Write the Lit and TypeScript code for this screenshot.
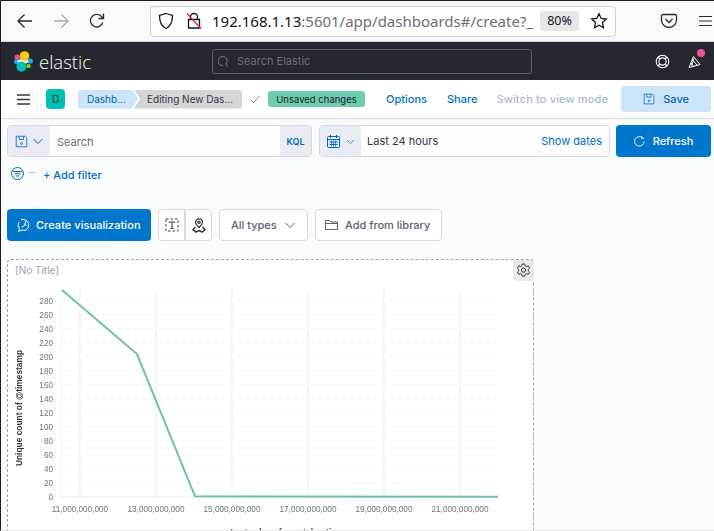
import { LitElement, html, css, svg } from "lit";
import { customElement } from "lit/decorators.js";

const Y_TICKS = [280, 260, 240, 220, 200, 180, 160, 140, 120, 100, 80, 60, 40, 20, 0];
const X_TICKS = [
  [80, "11,000,000,000"],
  [156, "13,000,000,000"],
  [232, "15,000,000,000"],
  [308, "17,000,000,000"],
  [384, "19,000,000,000"],
  [460, "21,000,000,000"],
] as const;

const yPos = (v: number) => 498 - (v / 20) * 14.02;

const chevron = html`<svg class="chev" width="12" height="12" viewBox="0 0 12 12"><path d="M1.5 4l4.5 4.5L10.500 4" fill="none" stroke="currentColor" stroke-width="1"/></svg>`;

const saveIcon = (size = 16) => html`<svg width=${size} height=${size} viewBox="0 0 16 16" fill="none" stroke="currentColor" stroke-width="1"><path d="M1.500 1.500h11l2 2v11h-13z"/><path d="M5 1.500v4h5.500v-4"/><circle cx="8" cy="10.500" r="1.200"/></svg>`;

@customElement("browser-bar")
class BrowserBar extends LitElement {
  static styles = css`
    :host {
      display: flex;
      align-items: center;
      height: 40px;
      background: #f9f9fb;
      border-bottom: 1px solid #cfcfd8;
      color: #2b2a33;
      font-family: "Noto Sans", sans-serif;
    }
    .nav {
      display: flex;
      align-items: center;
      gap: 18px;
      padding-left: 16px;
      width: 150px;
      box-sizing: border-box;
    }
    .url {
      display: flex;
      align-items: center;
      width: 466px;
      height: 31px;
      box-sizing: border-box;
      background: #fff;
      border: 1px solid #cfcfd8;
      border-radius: 4px;
      padding-left: 7px;
    }
    .lock {
      margin-left: 12px;
    }
    .addr {
      margin-left: 10px;
      width: 327px;
      overflow: hidden;
      white-space: nowrap;
      font-size: 15px;
      color: #6f6e76;
    }
    .addr b {
      font-weight: 400;
      color: #15141a;
    }
    .zoom {
      width: 39px;
      height: 20px;
      line-height: 20px;
      margin-left: 1px;
      text-align: center;
      background: #e7e7ea;
      border-radius: 3px;
      font-size: 12.500px;
      color: #15141a;
    }
    .star {
      margin-left: 11px;
    }
    .right {
      display: flex;
      align-items: center;
      margin-left: 44px;
      gap: 21px;
    }
  `;

  render() {
    return html`
      <div class="nav">
        <svg width="18" height="18" viewBox="0 0 18 18" fill="none" stroke="#2b2a33" stroke-width="1.300"><path d="M16 9H2M8.500 2.500L2 9l6.500 6.500"/></svg>
        <svg width="18" height="18" viewBox="0 0 18 18" fill="none" stroke="#a9a9ae" stroke-width="1.300"><path d="M2 9h14M9.500 2.500L16 9l-6.500 6.500"/></svg>
        <svg width="18" height="18" viewBox="0 0 18 18" fill="none" stroke="#2b2a33" stroke-width="1.300"><path d="M14.800 10.500A6.300 6.300 0 1 1 13 4l2 2M15.500 1.500V6.500H10.500"/></svg>
      </div>
      <div class="url">
        <svg width="16" height="18" viewBox="0 0 16 18" fill="none" stroke="#15141a" stroke-width="1.300"><path d="M8 1.500l6.500 2c0 6-1 10.500-6.500 13C2.500 14 1.500 9.500 1.500 3.500z"/></svg>
        <svg class="lock" width="16" height="18" viewBox="0 0 16 18" fill="none"><path d="M4.500 7.500V5a3.500 3.500 0 0 1 7 0v2.500M2.500 7.500h11v8.500h-11z" stroke="#15141a" stroke-width="1.300"/><path d="M1 1.500L15 16.500" stroke="#e22850" stroke-width="1.500"/></svg>
        <div class="addr"><b>192.168.1.13</b>:5601/app/dashboards#/create?_</div>
        <div class="zoom">80%</div>
        <svg class="star" width="18" height="18" viewBox="0 0 18 18" fill="none" stroke="#15141a" stroke-width="1.300"><path d="M9 1.800l2.200 4.700 5.100.6-3.800 3.500 1 5.100L9 13.200l-4.500 2.500 1-5.100-3.800-3.500 5.100-.6z"/></svg>
      </div>
      <div class="right">
        <svg width="18" height="18" viewBox="0 0 18 18" fill="none" stroke="#2b2a33" stroke-width="1.300"><path d="M3 2.500h12a1.500 1.500 0 0 1 1.500 1.500v4a7.500 7.500 0 0 1-15 0V4A1.500 1.500 0 0 1 3 2.500z"/><path d="M5.500 7L9 10.500 12.500 7"/></svg>
        <svg width="13" height="12" viewBox="0 0 13 12" stroke="#2b2a33" stroke-width="1.200"><path d="M0 1.500h13M0 6h13M0 10.500h13"/></svg>
      </div>
    `;
  }
}

@customElement("kbn-header")
class KbnHeader extends LitElement {
  static styles = css`
    :host {
      display: flex;
      align-items: center;
      height: 38px;
      background: #25282f;
      font-family: "Inter", sans-serif;
    }
    .logo {
      display: flex;
      align-items: center;
      width: 212px;
      padding-left: 14px;
      box-sizing: border-box;
      gap: 6px;
      color: #fff;
      font-family: "Open Sans", sans-serif;
      font-weight: 300;
      font-size: 18.500px;
    }
    .search {
      display: flex;
      align-items: center;
      gap: 8px;
      width: 320px;
      height: 25px;
      box-sizing: border-box;
      border: 1px solid #5d6066;
      border-radius: 3px;
      padding-left: 5px;
      color: #6d7076;
      font-size: 11px;
    }
    .icons {
      display: flex;
      align-items: center;
      margin-left: 123px;
      gap: 18px;
    }
    .bell {
      position: relative;
      display: flex;
    }
    .dot {
      position: absolute;
      top: -5px;
      right: -3px;
      width: 8px;
      height: 8px;
      border-radius: 50%;
      background: #f04e98;
    }
  `;

  render() {
    return html`
      <div class="logo">
        <svg width="19" height="21" viewBox="0 0 19 21">
          <circle cx="3.200" cy="6.200" r="2.600" fill="#f04e98"/>
          <circle cx="2.800" cy="10.800" r="2.700" fill="#1ba9f5"/>
          <circle cx="16.300" cy="10" r="2.600" fill="#1ba9f5"/>
          <circle cx="14.500" cy="15" r="2.200" fill="#93c90e"/>
          <ellipse cx="9" cy="10.300" rx="5.500" ry="2.600" fill="#e8f0f0"/>
          <circle cx="10.500" cy="5" r="4.800" fill="#fec514"/>
          <circle cx="7.500" cy="15.800" r="5" fill="#00bfb3"/>
        </svg>
        <span>elastic</span>
      </div>
      <div class="search">
        <svg width="11" height="11" viewBox="0 0 12 12" fill="none" stroke="#8a8d93" stroke-width="1"><path d="M8.500 9A5 5 0 1 0 5 10.500M8.500 9l2.500 2.500"/></svg>
        <span>Search Elastic</span>
      </div>
      <div class="icons">
        <svg width="15" height="15" viewBox="0 0 15 15" fill="none" stroke="#fff" stroke-width="1.100"><circle cx="7.500" cy="7.500" r="6.300"/><circle cx="7.500" cy="7.500" r="3.600"/><path d="M3 3l2 2M12 3l-2 2M3 12l2-2M12 12l-2-2"/></svg>
        <div class="bell">
          <svg width="14" height="15" viewBox="0 0 14 15" fill="none" stroke="#fff" stroke-width="1"><path d="M1 13.500L5.500 2.500l6.500 8z"/><path d="M4.200 5.500l5.500 6.300M2.800 9l3.500 3.800M6 4.500l-2.500 7"/></svg>
          <span class="dot"></span>
        </div>
      </div>
    `;
  }
}

@customElement("kbn-appbar")
class KbnAppbar extends LitElement {
  static styles = css`
    :host {
      display: flex;
      align-items: center;
      height: 38px;
      box-sizing: content-box;
      background: #fff;
      border-bottom: 1px solid #d3dae6;
      font-family: "Inter", sans-serif;
      font-size: 11px;
    }
    .burger {
      margin-left: 17px;
    }
    .badge {
      width: 19px;
      height: 20px;
      line-height: 20px;
      margin-left: 16px;
      text-align: center;
      background: #00bfb3;
      color: #1a1c21;
      border-radius: 4px;
      font-size: 10px;
    }
    .crumbs {
      display: flex;
      margin-left: 13px;
      height: 19px;
      line-height: 19px;
      font-size: 10px;
    }
    .crumb {
      white-space: nowrap;
    }
    .c1 {
      width: 60px;
      padding-left: 9px;
      box-sizing: border-box;
      background: #cce4f5;
      color: #006bb4;
      border-radius: 4px 0 0 4px;
      clip-path: polygon(0 0, 54px 0, 60px 50%, 54px 100%, 0 100%);
    }
    .c2 {
      width: 108px;
      margin-left: -4px;
      padding-left: 13px;
      box-sizing: border-box;
      background: #d3d5d9;
      color: #343741;
      border-radius: 0 4px 4px 0;
      clip-path: polygon(0 0, 100% 0, 100% 100%, 0 100%, 6px 50%);
    }
    .check {
      margin: 0 8px;
      color: #69707d;
    }
    .unsaved {
      width: 97px;
      height: 16px;
      line-height: 17px;
      text-align: center;
      background: #6dccb1;
      color: #1a1c21;
      border-radius: 3px;
      font-size: 9.500px;
      white-space: nowrap;
    }
    .link {
      color: #0071c2;
      font-weight: 500;
      white-space: nowrap;
    }
    .options {
      margin-left: 21px;
    }
    .share {
      margin-left: 20px;
    }
    .off {
      margin-left: 19px;
      color: #afb8cc;
      letter-spacing: 0.15px;
    }
    .save {
      display: flex;
      align-items: center;
      justify-content: center;
      gap: 8px;
      width: 90px;
      height: 26px;
      margin-left: 13px;
      background: #cce4f5;
      border-radius: 3px;
      color: #006bb4;
      font-weight: 500;
    }
  `;

  render() {
    return html`
      <svg class="burger" width="13" height="11" viewBox="0 0 13 11" stroke="#343741" stroke-width="1.300"><path d="M0 1h13M0 5.500h13M0 10h13"/></svg>
      <div class="badge">D</div>
      <div class="crumbs">
        <div class="crumb c1">Dashb...</div>
        <div class="crumb c2">Editing New Das...</div>
      </div>
      <svg class="check" width="10" height="10" viewBox="0 0 10 10" fill="none" stroke="currentColor" stroke-width="0.900"><path d="M.5 5.500L3.500 8.500 9.500 2"/></svg>
      <div class="unsaved">Unsaved changes</div>
      <span class="link options">Options</span>
      <span class="link share">Share</span>
      <span class="link off">Switch to view mode</span>
      <div class="save">${saveIcon(12)}<span>Save</span></div>
    `;
  }
}

@customElement("query-bar")
class QueryBar extends LitElement {
  static styles = css`
    :host {
      display: flex;
      gap: 7px;
      padding: 6px 3px 0 7px;
      font-family: "Inter", sans-serif;
      font-size: 11px;
    }
    .group {
      display: flex;
      height: 32px;
      box-sizing: border-box;
      border: 1px solid #d3dae6;
      border-radius: 4px;
      overflow: hidden;
      background: #fff;
    }
    .q {
      width: 305px;
    }
    .d {
      width: 291px;
      margin-right: -1px;
    }
    .pre {
      display: flex;
      align-items: center;
      background: #e9edf3;
      color: #006bb4;
    }
    .q .pre {
      width: 42px;
      padding-left: 7px;
      gap: 4px;
      box-sizing: border-box;
    }
    .d .pre {
      width: 41px;
      padding-left: 7px;
      gap: 6px;
      box-sizing: border-box;
    }
    .d .chev {
      width: 9px;
      height: 9px;
    }
    .field {
      flex: 1;
      display: flex;
      align-items: center;
      justify-content: space-between;
      padding: 0 7px;
      color: #69707d;
      background: #fdfdfe;
    }
    .q .field {
      padding-top: 2px;
    }
    .d .field {
      padding: 0 7px 0 6px;
    }
    .kql {
      display: flex;
      align-items: center;
      justify-content: center;
      width: 31px;
      background: #e9edf3;
      color: #006bb4;
      font-size: 9px;
      font-weight: 600;
    }
    .range {
      color: #343741;
    }
    .show {
      color: #0071c2;
    }
    .refresh {
      display: flex;
      align-items: center;
      justify-content: center;
      gap: 8px;
      width: 95px;
      height: 32px;
      background: #0077cc;
      color: #fff;
      border-radius: 4px;
      font-weight: 500;
    }
  `;

  render() {
    return html`
      <div class="group q">
        <div class="pre">${saveIcon(13)}${chevron}</div>
        <div class="field"><span>Search</span></div>
        <div class="kql">KQL</div>
      </div>
      <div class="group d">
        <div class="pre">
          <svg width="13" height="13" viewBox="0 0 13 13" fill="none" stroke="currentColor" stroke-width="1"><rect x=".5" y="1.500" width="12" height="11" rx="1"/><path d="M.5 4.500h12M3.500 0v3M9.500 0v3M2.500 7h8M2.500 9.500h8" /><path d="M4.500 5.500v6M6.500 5.500v6M8.500 5.500v6" stroke-width=".7"/></svg>
          ${chevron}
        </div>
        <div class="field">
          <span class="range">Last 24 hours</span>
          <span class="show">Show dates</span>
        </div>
      </div>
      <div class="refresh">
        <svg width="11" height="11" viewBox="0 0 12 12" fill="none" stroke="#fff" stroke-width="1"><path d="M9 1.700A5.200 5.200 0 1 0 11 6M8.500 .3v2.500H11"/></svg>
        <span>Refresh</span>
      </div>
    `;
  }
}

@customElement("filter-row")
class FilterRow extends LitElement {
  static styles = css`
    :host {
      display: flex;
      align-items: flex-start;
      height: 37px;
      padding: 10px 0 0 11px;
      box-sizing: border-box;
      font-family: "Inter", sans-serif;
      font-size: 11px;
      font-weight: 500;
      color: #0071c2;
    }
    .dash {
      width: 8px;
      height: 1px;
      margin: 5px 7px 0 4px;
      background: #d3dae6;
    }
    span {
      margin-top: 1px;
    }
  `;

  render() {
    return html`
      <svg width="13" height="13" viewBox="0 0 13 13" fill="none" stroke="#006bb4" stroke-width="1"><circle cx="6.500" cy="6.500" r="6"/><path d="M2 4.500h9M3.500 6.800h6M5 9h3"/></svg>
      <div class="dash"></div>
      <span>+ Add filter</span>
    `;
  }
}

@customElement("panel-toolbar")
class PanelToolbar extends LitElement {
  static styles = css`
    :host {
      display: flex;
      gap: 7px;
      padding: 15px 0 0 7px;
      font-family: "Inter", sans-serif;
      font-size: 11px;
      font-weight: 500;
    }
    .create {
      display: flex;
      align-items: center;
      gap: 5px;
      width: 144px;
      height: 32px;
      padding-left: 10px;
      box-sizing: border-box;
      background: #0077cc;
      color: #fff;
      border-radius: 4px;
      white-space: nowrap;
      letter-spacing: 0.05px;
    }
    .btn {
      display: flex;
      align-items: center;
      height: 32px;
      box-sizing: border-box;
      background: #fff;
      border: 1px solid #d3dae6;
      border-radius: 4px;
      color: #5a6270;
      white-space: nowrap;
    }
    .icons {
      width: 54px;
      color: #343741;
    }
    .cell {
      flex: 1;
      display: flex;
      align-items: center;
      justify-content: center;
      height: 100%;
    }
    .cell + .cell {
      border-left: 2px solid #d3dae6;
    }
    .types {
      width: 89px;
      justify-content: space-between;
      padding: 0 11px;
    }
    .lib {
      width: 127px;
      gap: 7px;
      padding-left: 9px;
    }
  `;

  render() {
    return html`
      <div class="create">
        <svg width="14" height="14" viewBox="0 0 14 14" fill="none" stroke="#fff" stroke-width="1"><path d="M4 1.800A5.600 5.600 0 1 1 8 12.500L5 12l-3.500 1.500 1-3A5.600 5.600 0 0 1 2 4"/><path d="M4.500 9c1.500-.3 2.500-.8 3-2l1.500-4"/><path d="M9.500 7.500l-1.500-.7"/></svg>
        <span>Create visualization</span>
      </div>
      <div class="btn icons">
        <div class="cell">
          <svg width="14" height="14" viewBox="0 0 14 14" fill="none" stroke="currentColor" stroke-width="1"><path d="M1 1h12v12H1z" stroke-dasharray="2.500 2"/><path d="M4 4.500V4h6v.5M7 4v6.500M5.500 10.500h3"/></svg>
        </div>
        <div class="cell">
          <svg width="14" height="15" viewBox="0 0 14 15" fill="none" stroke="currentColor" stroke-width="1.200"><path d="M7 9.500C4.700 7.200 3.500 5.800 3.500 4.300a3.500 3.500 0 0 1 7 0C10.500 5.800 9.300 7.200 7 9.500z"/><circle cx="7" cy="4.300" r="1.200"/><path d="M3.500 9L1 11.500l3 2.500 3-1.500 3 1.500 3-2.500L10.500 9" stroke-width="1.500"/></svg>
        </div>
      </div>
      <div class="btn types"><span>All types</span>${chevron}</div>
      <div class="btn lib">
        <svg width="13" height="12" viewBox="0 0 13 12" fill="none" stroke="currentColor" stroke-width="1"><path d="M.5 10.500V1.500h4l1.500 1.500h6.500v7.500z"/><path d="M.5 4.500h12"/></svg>
        <span>Add from library</span>
      </div>
    `;
  }
}

@customElement("vis-panel")
class VisPanel extends LitElement {
  static styles = css`
    :host {
      display: block;
      position: relative;
      width: 527px;
      height: 272px;
      margin: 18px 0 0 7px;
      box-sizing: border-box;
      background: #fff;
      border: 1px dashed #a0a4b0;
      border-bottom: none;
      border-radius: 4px 4px 0 0;
      font-family: "Inter", sans-serif;
    }
    .title {
      position: absolute;
      left: 7px;
      top: 4px;
      font-size: 10px;
      color: #98a2b3;
    }
    .gear {
      position: absolute;
      right: -1px;
      top: 0;
      width: 21px;
      height: 21px;
      display: flex;
      align-items: center;
      justify-content: center;
      background: #e9e9eb;
      border-radius: 0 4px 0 4px;
    }
    svg.chart {
      position: absolute;
      left: -8px;
      top: -1px;
      filter: blur(0.3px);
    }
    .tick {
      font: 8.200px "Liberation Sans", sans-serif;
      fill: #6f737c;
    }
    .axis {
      font: bold 8.400px "Liberation Sans", sans-serif;
      fill: #343741;
    }
  `;

  render() {
    return html`
      <div class="title">[No Title]</div>
      <div class="gear">
        <svg width="15" height="15" viewBox="0 0 15 15" fill="none" stroke="#343741" stroke-width="1"><path d="M6.200 1h2.600l.4 1.800 1.300.7 1.800-.6 1.300 2.200-1.400 1.300v1.400l1.400 1.300-1.300 2.200-1.800-.6-1.300.7-.4 1.800H6.200l-.4-1.800-1.300-.7-1.800.6L1.400 9.100l1.400-1.300V6.400L1.400 5.100l1.300-2.200 1.800.6 1.300-.7z"/><circle cx="7.500" cy="7.100" r="2.100"/></svg>
      </div>
      <svg class="chart" width="534" height="272" viewBox="0 260 534 272">
        ${Y_TICKS.map((v) => svg`
          <line x1="61" x2="498" y1=${yPos(v)} y2=${yPos(v)} stroke="#eef0f4" stroke-width="1" stroke-dasharray="4 4"/>
          <text class="tick" x="53" y=${yPos(v) + 3} text-anchor="end">${v}</text>
        `)}
        <line x1="61" x2="498" y1="498" y2="498" stroke="#eef1f6"/>
        <line x1="61" x2="61" y1="291" y2="498" stroke="#f5f6f9"/>
        ${X_TICKS.map(([x, label]) => svg`
          <line x1=${x} x2=${x} y1="291" y2="498" stroke="#eef0f5" stroke-width="1.500"/>
          <text class="tick" x=${x} y="513" text-anchor="middle">${label}</text>
        `)}
        <polyline points="62,291 137,355 195,497.300 498,497.700" fill="none" stroke="#6dc2a6" stroke-width="2"/>
        <text class="axis" transform="translate(22 409) rotate(-90)" text-anchor="middle">Unique count of @timestamp</text>
        <text class="axis" x="286" y="536" text-anchor="middle">Last value of event.duration</text>
      </svg>
    `;
  }
}

@customElement("app-root")
export class AppRoot extends LitElement {
  static styles = css`
    :host {
      display: block;
      width: 714px;
      height: 531px;
      overflow: hidden;
      box-sizing: border-box;
      background: #fafbfd;
      border-top: 1px solid #1c1b22;
      border-left: 1px solid #1c1b22;
      border-bottom: 1px solid #e6e8ed;
    }
    .shell {
      margin-left: -1px;
    }
  `;

  render() {
    return html`
      <div class="shell">
        <browser-bar></browser-bar>
        <kbn-header></kbn-header>
        <kbn-appbar></kbn-appbar>
        <query-bar></query-bar>
        <filter-row></filter-row>
        <panel-toolbar></panel-toolbar>
        <vis-panel></vis-panel>
      </div>
    `;
  }
}
